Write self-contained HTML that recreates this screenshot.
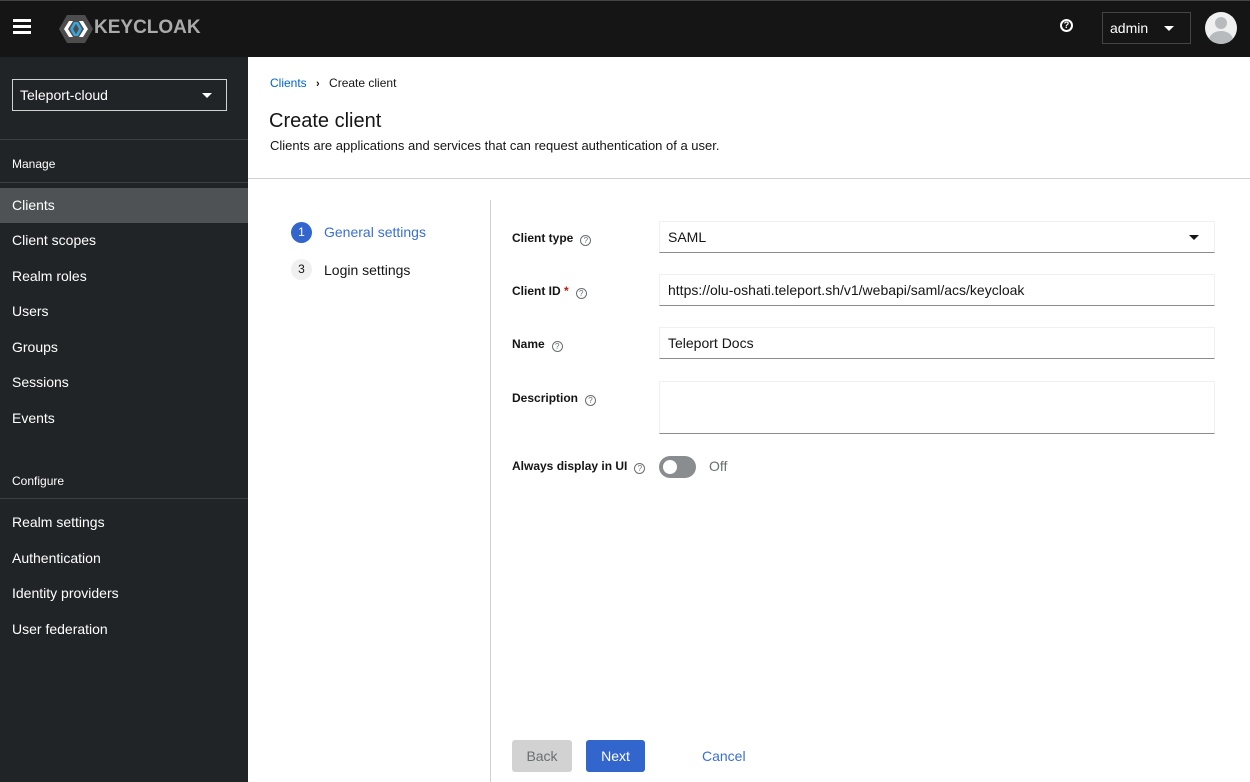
<!DOCTYPE html>
<html><head><meta charset="utf-8"><style>
*{box-sizing:border-box;margin:0;padding:0}
body{width:1250px;height:782px;overflow:hidden;font-family:"Liberation Sans",sans-serif;background:#fff;position:relative;color:#151515}
.hdr{position:absolute;left:0;top:0;width:1250px;height:57px;background:#151515;border-top:1px solid #444}
.side{position:absolute;left:0;top:57px;width:248px;height:725px;background:#212427;color:#fff}
.ab{position:absolute}
.nav{position:absolute;left:0;width:248px;height:35px;font-size:14px;line-height:35px;padding-left:12px;color:#fff}
.sec{position:absolute;left:12px;font-size:12px;color:#fff}
.line{position:absolute;left:0;width:248px;height:1px;background:#3c3f42}
.lbl{position:absolute;left:512px;font-size:12px;font-weight:bold;color:#151515}
.q{display:inline-block;width:11px;height:11px;border:1px solid #6a6e73;border-radius:50%;font-size:8px;line-height:9px;text-align:center;color:#6a6e73;font-weight:normal;margin-left:7px;vertical-align:-1px}
.inp{position:absolute;left:659px;width:556px;height:32px;border:1px solid #f0f0f0;border-bottom:1px solid #8a8d90;font-size:14px;line-height:30px;padding-left:8px}
</style></head><body>
<div class="hdr">
 <div class="ab" style="left:13px;top:18px;width:18px;height:3px;background:#fff;box-shadow:0 6px 0 #fff,0 12px 0 #fff"></div>
 <svg class="ab" style="left:58px;top:13px" width="36" height="30" viewBox="0 0 36 30"><polygon points="9,1 27,1 35,15 27,29 9,29 1,15" fill="#4d4d4d"/><polygon points="6,15 11,7 15,7 10,15 15,23 11,23" fill="#fff"/><polygon points="12,15 16,8 19,8 15,15 19,22 16,22" fill="#39a5dc"/><polygon points="30,15 25,7 21,7 26,15 21,23 25,23" fill="#fff"/><polygon points="24,15 20,8 17,8 21,15 17,22 20,22" fill="#39a5dc"/></svg>
 <div class="ab" style="left:94px;top:16px;font-size:19px;font-weight:bold;color:#aaa;letter-spacing:0px">KEYCLOAK</div>
 <div class="ab" style="left:1060px;top:18px;width:13px;height:13px;border:2px solid #fff;border-radius:50%;color:#fff;font-size:9px;font-weight:bold;line-height:9px;text-align:center">?</div>
 <div class="ab" style="left:1102px;top:11px;width:89px;height:32px;border:1px solid #444;color:#fff;font-size:14px;line-height:30px;padding-left:7px">admin<span style="position:absolute;left:61px;top:13px;border:5px solid transparent;border-top:5px solid #fff;border-bottom:0"></span></div>
 <div class="ab" style="left:1205px;top:11px;width:32px;height:32px;border-radius:50%;background:#f0f0f0;overflow:hidden"><div class="ab" style="left:10px;top:5px;width:12px;height:12px;border-radius:50%;background:#b8bbbe"></div><div class="ab" style="left:4px;top:19px;width:24px;height:18px;border-radius:50% 50% 0 0;background:#b8bbbe"></div></div>
</div>
<div class="side">
 <div class="ab" style="left:12px;top:22px;width:215px;height:32px;border:1px solid #d2d2d2;font-size:14px;line-height:30px;padding-left:7px">Teleport-cloud<span style="position:absolute;left:189px;top:13px;border:5px solid transparent;border-top:5px solid #fff;border-bottom:0"></span></div>
 <div class="line" style="top:82px"></div>
 <div class="sec" style="top:100px">Manage</div>
 <div class="line" style="top:125px"></div>
 <div class="nav" style="top:131px;background:#4f5255">Clients</div>
 <div class="nav" style="top:166px">Client scopes</div>
 <div class="nav" style="top:202px">Realm roles</div>
 <div class="nav" style="top:237px">Users</div>
 <div class="nav" style="top:273px">Groups</div>
 <div class="nav" style="top:308px">Sessions</div>
 <div class="nav" style="top:344px">Events</div>
 <div class="sec" style="top:417px">Configure</div>
 <div class="line" style="top:441px"></div>
 <div class="nav" style="top:448px">Realm settings</div>
 <div class="nav" style="top:484px">Authentication</div>
 <div class="nav" style="top:519px">Identity providers</div>
 <div class="nav" style="top:555px">User federation</div>
</div>
<div class="ab" style="left:270px;top:76px;font-size:12px"><span style="color:#0066cc">Clients</span> <b style="margin:0 6px;font-size:11px">›</b> Create client</div>
<div class="ab" style="left:269px;top:110px;font-size:20px">Create client</div>
<div class="ab" style="left:270px;top:138px;font-size:13px">Clients are applications and services that can request authentication of a user.</div>
<div class="ab" style="left:248px;top:178px;width:1002px;height:1px;background:#d2d2d2"></div>
<div class="ab" style="left:490px;top:200px;width:1px;height:582px;background:#d2d2d2"></div>
<div class="ab" style="left:291px;top:222px;width:21px;height:21px;border-radius:50%;background:#3366cc;color:#fff;font-size:12px;line-height:21px;text-align:center">1</div>
<div class="ab" style="left:324px;top:224px;font-size:14px;color:#3a6fd4">General settings</div>
<div class="ab" style="left:291px;top:259px;width:21px;height:21px;border-radius:50%;background:#f0f0f0;color:#151515;font-size:12px;line-height:21px;text-align:center">3</div>
<div class="ab" style="left:324px;top:262px;font-size:14px">Login settings</div>
<div class="lbl" style="top:231px">Client type<span class="q">?</span></div>
<div class="inp" style="top:221px">SAML<span style="position:absolute;left:529px;top:13px;border:5px solid transparent;border-top:5px solid #151515;border-bottom:0"></span></div>
<div class="lbl" style="top:284px">Client ID <span style="color:#c9190b">*</span><span class="q">?</span></div>
<div class="inp" style="top:274px">https://olu-oshati.teleport.sh/v1/webapi/saml/acs/keycloak</div>
<div class="lbl" style="top:337px">Name<span class="q">?</span></div>
<div class="inp" style="top:327px">Teleport Docs</div>
<div class="lbl" style="top:391px">Description<span class="q">?</span></div>
<div class="inp" style="top:381px;height:53px"></div>
<div class="lbl" style="top:459px">Always display in UI<span class="q">?</span></div>
<div class="ab" style="left:659px;top:456px;width:37px;height:22px;border-radius:11px;background:#8a8d90"><div class="ab" style="left:4px;top:4px;width:14px;height:14px;border-radius:50%;background:#fff"></div></div>
<div class="ab" style="left:709px;top:458px;font-size:14px;color:#6a6e73">Off</div>
<div class="ab" style="left:512px;top:740px;width:60px;height:32px;border-radius:3px;background:#d2d2d2;color:#6a6e73;font-size:14px;line-height:32px;text-align:center">Back</div>
<div class="ab" style="left:586px;top:740px;width:59px;height:32px;border-radius:3px;background:#3366cc;color:#fff;font-size:14px;line-height:32px;text-align:center">Next</div>
<div class="ab" style="left:702px;top:748px;font-size:14px;color:#3a6fd4">Cancel</div>
</body></html>
